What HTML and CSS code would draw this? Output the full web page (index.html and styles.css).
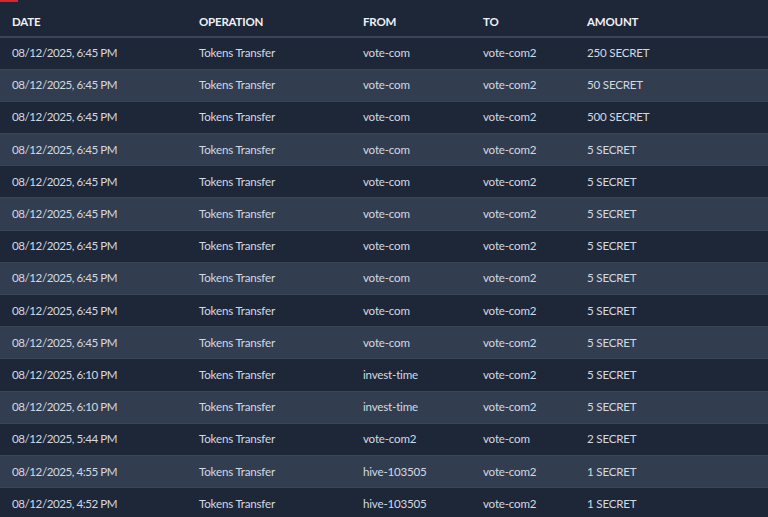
FILE: index.html
```html
<!DOCTYPE html>
<html>
<head>
<meta charset="utf-8">
<link rel="stylesheet" href="styles.css">
</head>
<body>
<div class="page">
  <span class="flag"></span>
  <table class="tx">
    <colgroup>
      <col class="c1"><col class="c2"><col class="c3"><col class="c4"><col class="c5">
    </colgroup>
    <thead>
      <tr><th>DATE</th><th>OPERATION</th><th>FROM</th><th>TO</th><th>AMOUNT</th></tr>
    </thead>
    <tbody>
      <tr><td class="d">08/12/2025, 6:45 PM</td><td>Tokens Transfer</td><td>vote-com</td><td>vote-com2</td><td>250 SECRET</td></tr>
      <tr><td class="d">08/12/2025, 6:45 PM</td><td>Tokens Transfer</td><td>vote-com</td><td>vote-com2</td><td>50 SECRET</td></tr>
      <tr><td class="d">08/12/2025, 6:45 PM</td><td>Tokens Transfer</td><td>vote-com</td><td>vote-com2</td><td>500 SECRET</td></tr>
      <tr><td class="d">08/12/2025, 6:45 PM</td><td>Tokens Transfer</td><td>vote-com</td><td>vote-com2</td><td>5 SECRET</td></tr>
      <tr><td class="d">08/12/2025, 6:45 PM</td><td>Tokens Transfer</td><td>vote-com</td><td>vote-com2</td><td>5 SECRET</td></tr>
      <tr><td class="d">08/12/2025, 6:45 PM</td><td>Tokens Transfer</td><td>vote-com</td><td>vote-com2</td><td>5 SECRET</td></tr>
      <tr><td class="d">08/12/2025, 6:45 PM</td><td>Tokens Transfer</td><td>vote-com</td><td>vote-com2</td><td>5 SECRET</td></tr>
      <tr><td class="d">08/12/2025, 6:45 PM</td><td>Tokens Transfer</td><td>vote-com</td><td>vote-com2</td><td>5 SECRET</td></tr>
      <tr><td class="d">08/12/2025, 6:45 PM</td><td>Tokens Transfer</td><td>vote-com</td><td>vote-com2</td><td>5 SECRET</td></tr>
      <tr><td class="d">08/12/2025, 6:45 PM</td><td>Tokens Transfer</td><td>vote-com</td><td>vote-com2</td><td>5 SECRET</td></tr>
      <tr><td class="d">08/12/2025, 6:10 PM</td><td>Tokens Transfer</td><td>invest-time</td><td>vote-com2</td><td>5 SECRET</td></tr>
      <tr><td class="d">08/12/2025, 6:10 PM</td><td>Tokens Transfer</td><td>invest-time</td><td>vote-com2</td><td>5 SECRET</td></tr>
      <tr><td class="d">08/12/2025, 5:44 PM</td><td>Tokens Transfer</td><td>vote-com2</td><td>vote-com</td><td>2 SECRET</td></tr>
      <tr><td class="d">08/12/2025, 4:55 PM</td><td>Tokens Transfer</td><td>hive-103505</td><td>vote-com2</td><td>1 SECRET</td></tr>
      <tr><td class="d">08/12/2025, 4:52 PM</td><td>Tokens Transfer</td><td>hive-103505</td><td>vote-com2</td><td>1 SECRET</td></tr>
    </tbody>
  </table>
</div>
</body>
</html>
```

FILE: styles.css
```css
html, body {
  margin: 0;
  padding: 0;
  background: #1e2738;
  overflow: hidden;
}
.page {
  position: relative;
  width: 768px;
  height: 517px;
  background: #1e2738;
  font-family: "Lato", "Noto Sans", sans-serif;
}
.flag {
  position: absolute;
  left: 0;
  top: 0;
  width: 18px;
  height: 2px;
  background: #d8242c;
}
.tx {
  width: 768px;
  border-collapse: collapse;
  table-layout: fixed;
}
.c1 { width: 187px; }
.c2 { width: 164px; }
.c3 { width: 120px; }
.c4 { width: 104px; }
.c5 { width: 193px; }
.tx th {
  box-sizing: border-box;
  height: 37px;
  padding: 7px 0 0 12px;
  text-align: left;
  font-size: 11.5px;
  font-weight: 700;
  letter-spacing: -0.2px;
  color: #eef1f5;
  border-bottom: 2px solid #394456;
}
.tx td {
  height: 32.2px;
  box-sizing: border-box;
  padding: 0 0 1px 12px;
  font-size: 11.6px;
  letter-spacing: -0.2px;
  color: #d3d9e1;
  border-bottom: 1px solid #3a4557;
  white-space: nowrap;
}
.tx td.d {
  letter-spacing: -0.45px;
}
.tx tbody tr:nth-child(even) td {
  background: #323e50;
}
```
